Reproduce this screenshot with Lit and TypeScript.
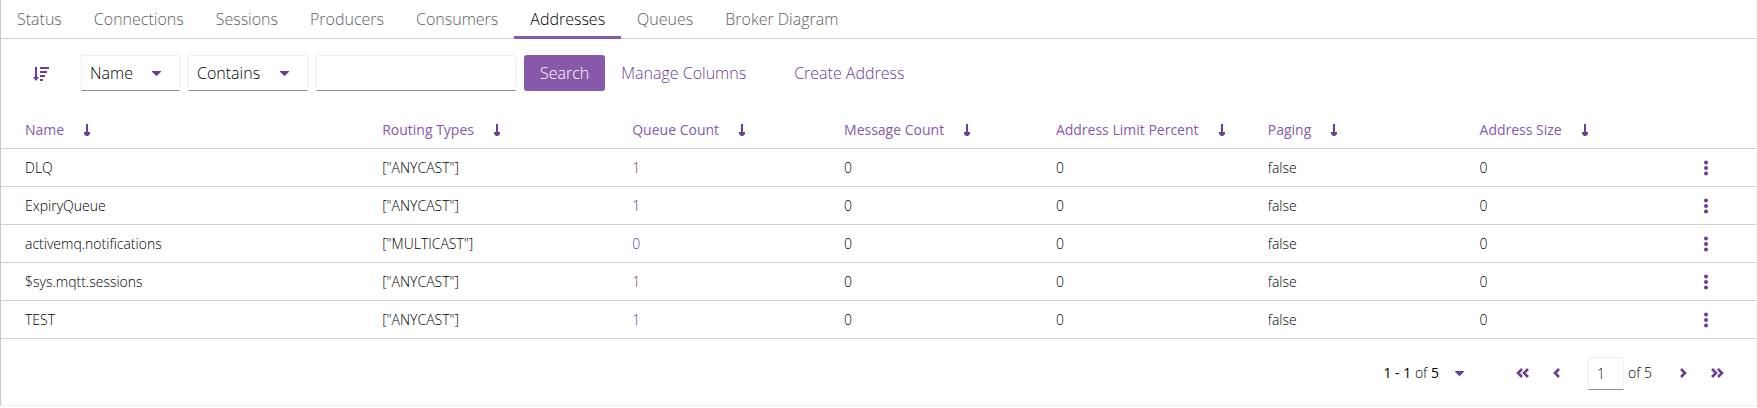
import {LitElement, css, html, svg} from 'lit';
import {customElement, property, state} from 'lit/decorators.js';
import {classMap} from 'lit/directives/class-map.js';

interface Address {
  name: string;
  routingTypes: string;
  queueCount: number;
  messageCount: number;
  limitPercent: number;
  paging: boolean;
  size: number;
}

const TABS = ['Status', 'Connections', 'Sessions', 'Producers', 'Consumers', 'Addresses', 'Queues', 'Broker Diagram'];

const COLUMNS = [
  {label: 'Name', size: 'xl'},
  {label: 'Routing Types', size: 'lg'},
  {label: 'Queue Count', size: 'md'},
  {label: 'Message Count', size: 'md'},
  {label: 'Address Limit Percent', size: 'md'},
  {label: 'Paging', size: 'md'},
  {label: 'Address Size', size: 'md'},
];

const address = (name: string, type: string, queueCount: number): Address => ({
  name,
  routingTypes: `["${type}"]`,
  queueCount,
  messageCount: 0,
  limitPercent: 0,
  paging: false,
  size: 0,
});

const ADDRESSES: Address[] = [
  address('DLQ', 'ANYCAST', 1),
  address('ExpiryQueue', 'ANYCAST', 1),
  address('activemq.notifications', 'MULTICAST', 0),
  address('$sys.mqtt.sessions', 'ANYCAST', 1),
  address('TEST', 'ANYCAST', 1),
];

const ICONS = {
  sort: {
    width: 16,
    height: 15,
    shape: svg`<path d="M2 1h2v10h2L3 15 0 11h2zM7 1h9v2H7zM7 5h7v2H7zM7 9h5v2H7zM7 13h3v2H7z"/>`,
  },
  down: {
    width: 6,
    height: 12,
    shape: svg`<path d="M2 0h2v8h2v2l-2 2H2L0 10V8h2z"/>`,
  },
  caret: {
    width: 9,
    height: 5,
    shape: svg`<path d="M.6 0h7.800c.6 0 .8.6.4 1L5 4.800c-.3.3-.7.3-1 0L.2 1C-.2.600 0 0 .6 0z"/>`,
  },
  kebab: {
    width: 4,
    height: 16,
    shape: svg`<circle cx="2" cy="2.500" r="2"/><circle cx="2" cy="8" r="2"/><circle cx="2" cy="13.500" r="2"/>`,
  },
  first: {
    width: 13,
    height: 10,
    shape: svg`<path class="line" d="M6 1 2 5l4 4M12 1 8 5l4 4"/>`,
  },
  previous: {
    width: 7,
    height: 10,
    shape: svg`<path class="line" d="M6 1 2 5l4 4"/>`,
  },
  next: {
    width: 7,
    height: 10,
    shape: svg`<path class="line" d="m1 1 4 4-4 4"/>`,
  },
  last: {
    width: 13,
    height: 10,
    shape: svg`<path class="line" d="m1 1 4 4-4 4M7 1l4 4-4 4"/>`,
  },
};

@customElement('ui-icon')
export class Icon extends LitElement {
  static styles = css`
    :host {
      display: inline-flex;
      flex: none;
    }

    .icon {
      display: block;
      overflow: visible;
      fill: #6b3d94;
    }

    .line {
      fill: none;
      stroke: #6b3d94;
      stroke-width: 2.6;
    }
  `;

  @property()
  name: keyof typeof ICONS = 'caret';

  render() {
    const icon = ICONS[this.name];
    return html`<svg class="icon" width=${icon.width} height=${icon.height}
      viewBox="0 0 ${icon.width} ${icon.height}" aria-hidden="true">${icon.shape}</svg>`;
  }
}

@customElement('ui-tabs')
export class Tabs extends LitElement {
  static styles = css`
    .tabs {
      display: flex;
      border-bottom: 1px solid #d2d2d2;
    }

    .tab {
      margin: 0 0 -1px;
      border: none;
      border-bottom: 3px solid transparent;
      padding: 7px 16px 5px;
      background: none;
      font: inherit;
      line-height: 24px;
      color: #5c6065;
      cursor: pointer;
    }

    .tab--current {
      border-bottom-color: #8859a9;
      color: #000;
    }
  `;

  @state()
  current = 'Addresses';

  render() {
    return html`<div class="tabs" role="tablist">
      ${TABS.map((tab) => html`<button
        role="tab"
        aria-selected=${tab === this.current}
        class=${classMap({'tab': true, 'tab--current': tab === this.current})}
        @click=${() => (this.current = tab)}
      >${tab}</button>`)}
    </div>`;
  }
}

@customElement('ui-toolbar')
export class Toolbar extends LitElement {
  static styles = css`
    .toolbar {
      display: flex;
      align-items: center;
      gap: 8px;
      padding: 16px 16px 20px;
    }

    .sort {
      display: flex;
      margin-right: 8px;
      border: none;
      padding: 8px 16px;
      background: none;
      cursor: pointer;
    }

    .select {
      display: grid;
      align-items: center;
    }

    .select__control,
    .select ui-icon {
      grid-area: 1 / 1;
    }

    .select ui-icon {
      justify-self: end;
      margin-right: 19px;
      pointer-events: none;
    }

    .select__control,
    .text {
      box-sizing: border-box;
      height: 36px;
      margin: 0;
      border: 1px solid #f0f0f0;
      border-bottom-color: #8a8d90;
      border-radius: 0;
      padding: 0 8px;
      background: #fff;
      font: inherit;
      color: #000;
    }

    .select__control {
      appearance: none;
      padding-right: 46px;
    }

    .text {
      width: 200px;
    }

    .button {
      border: none;
      border-radius: 3px;
      padding: 6px 16px;
      background: #8859a9;
      font: inherit;
      line-height: 24px;
      color: #fff;
      cursor: pointer;
    }

    .button--link {
      background: none;
      color: #6b3d94;
    }

    .button--tight {
      margin-right: 8px;
      padding-left: 8px;
    }
  `;

  render() {
    return html`<form class="toolbar" @submit=${(e: Event) => e.preventDefault()}>
      <button class="sort" type="button" aria-label="Sort"><ui-icon name="sort"></ui-icon></button>
      <div class="select">
        <select class="select__control" aria-label="Filter column"><option>Name</option></select>
        <ui-icon name="caret"></ui-icon>
      </div>
      <div class="select">
        <select class="select__control" aria-label="Filter operation"><option>Contains</option></select>
        <ui-icon name="caret"></ui-icon>
      </div>
      <input class="text" type="text" aria-label="Filter value">
      <button class="button" type="submit">Search</button>
      <button class="button button--link button--tight" type="button">Manage Columns</button>
      <button class="button button--link" type="button">Create Address</button>
    </form>`;
  }
}

@customElement('address-table')
export class AddressTable extends LitElement {
  static styles = css`
    .table {
      width: 100%;
      border-collapse: collapse;
      table-layout: fixed;
      font-size: 14px;
      line-height: 21px;
      color: #000;
    }

    .cell {
      box-sizing: border-box;
      border-bottom: 1px solid #d2d2d2;
      padding: 8px 0 8px 24px;
      text-align: left;
      font-weight: inherit;
      white-space: nowrap;
    }

    .cell--xl { width: 20.35%; }
    .cell--lg { width: 14.25%; }
    .cell--md { width: 12.07%; }

    .cell--action {
      padding-right: 48px;
      text-align: right;
    }

    .sort {
      display: flex;
      align-items: center;
      gap: 20px;
      border: none;
      padding: 0;
      background: none;
      font: inherit;
      font-weight: 500;
      color: #8859a9;
      cursor: pointer;
    }

    .link {
      color: #6b3d94;
      text-decoration: none;
    }

    .kebab {
      display: flex;
      margin-left: auto;
      border: none;
      padding: 0;
      background: none;
      cursor: pointer;
    }
  `;

  render() {
    return html`<table class="table">
      <thead>
        <tr>
          ${COLUMNS.map(({label, size}) => html`<th class="cell cell--${size}" scope="col">
            <button class="sort">${label}<ui-icon name="down"></ui-icon></button>
          </th>`)}
          <td class="cell"></td>
        </tr>
      </thead>
      <tbody>
        ${ADDRESSES.map((row) => html`<tr>
          <td class="cell">${row.name}</td>
          <td class="cell">${row.routingTypes}</td>
          <td class="cell"><a class="link" href="#queues">${row.queueCount}</a></td>
          <td class="cell">${row.messageCount}</td>
          <td class="cell">${row.limitPercent}</td>
          <td class="cell">${row.paging}</td>
          <td class="cell">${row.size}</td>
          <td class="cell cell--action">
            <button class="kebab" aria-label="Actions for ${row.name}"><ui-icon name="kebab"></ui-icon></button>
          </td>
        </tr>`)}
      </tbody>
    </table>`;
  }
}

@customElement('ui-pagination')
export class Pagination extends LitElement {
  static styles = css`
    .pagination {
      display: flex;
      align-items: center;
      justify-content: flex-end;
      border-bottom: 1px solid #f0f0f0;
      padding: 16px 16px 14px;
      font-size: 14px;
      color: #000;
    }

    .range,
    .nav {
      display: flex;
      align-items: center;
      border: none;
      background: none;
      font: inherit;
      color: inherit;
      cursor: pointer;
    }

    .range {
      gap: 16px;
      margin-right: 28px;
      padding: 6px 8px;
    }

    .total {
      font-weight: 500;
    }

    .nav {
      padding: 8px 16px;
    }

    .nav--narrow {
      padding: 8px;
    }

    .page {
      display: flex;
      align-items: center;
      gap: 4px;
      margin: 0 20px;
    }

    .page__input {
      box-sizing: border-box;
      width: 36px;
      height: 33px;
      border: 1px solid #f0f0f0;
      border-bottom-color: #8a8d90;
      border-radius: 0;
      padding: 0 8px;
      font: inherit;
      color: #151515;
    }
  `;

  render() {
    return html`<nav class="pagination" aria-label="Pagination">
      <button class="range">
        <span><b class="total">1 - 1</b> of <b class="total">5</b></span>
        <ui-icon name="caret"></ui-icon>
      </button>
      <button class="nav" aria-label="First page"><ui-icon name="first"></ui-icon></button>
      <button class="nav nav--narrow" aria-label="Previous page"><ui-icon name="previous"></ui-icon></button>
      <label class="page">
        <input class="page__input" type="text" aria-label="Current page" .value=${'1'}>
        <span>of 5</span>
      </label>
      <button class="nav nav--narrow" aria-label="Next page"><ui-icon name="next"></ui-icon></button>
      <button class="nav" aria-label="Last page"><ui-icon name="last"></ui-icon></button>
    </nav>`;
  }
}

@customElement('app-root')
export class AppRoot extends LitElement {
  static styles = css`
    :host {
      display: block;
      border-left: 1px solid #c8c8c8;
      border-right: 1px solid #f5f5f5;
      background: #fff;
      font-family: 'Open Sans', sans-serif;
      font-size: 16px;
      font-weight: 300;
      line-height: 24px;
    }
  `;

  render() {
    return html`
      <ui-tabs></ui-tabs>
      <ui-toolbar></ui-toolbar>
      <address-table></address-table>
      <ui-pagination></ui-pagination>
    `;
  }
}
